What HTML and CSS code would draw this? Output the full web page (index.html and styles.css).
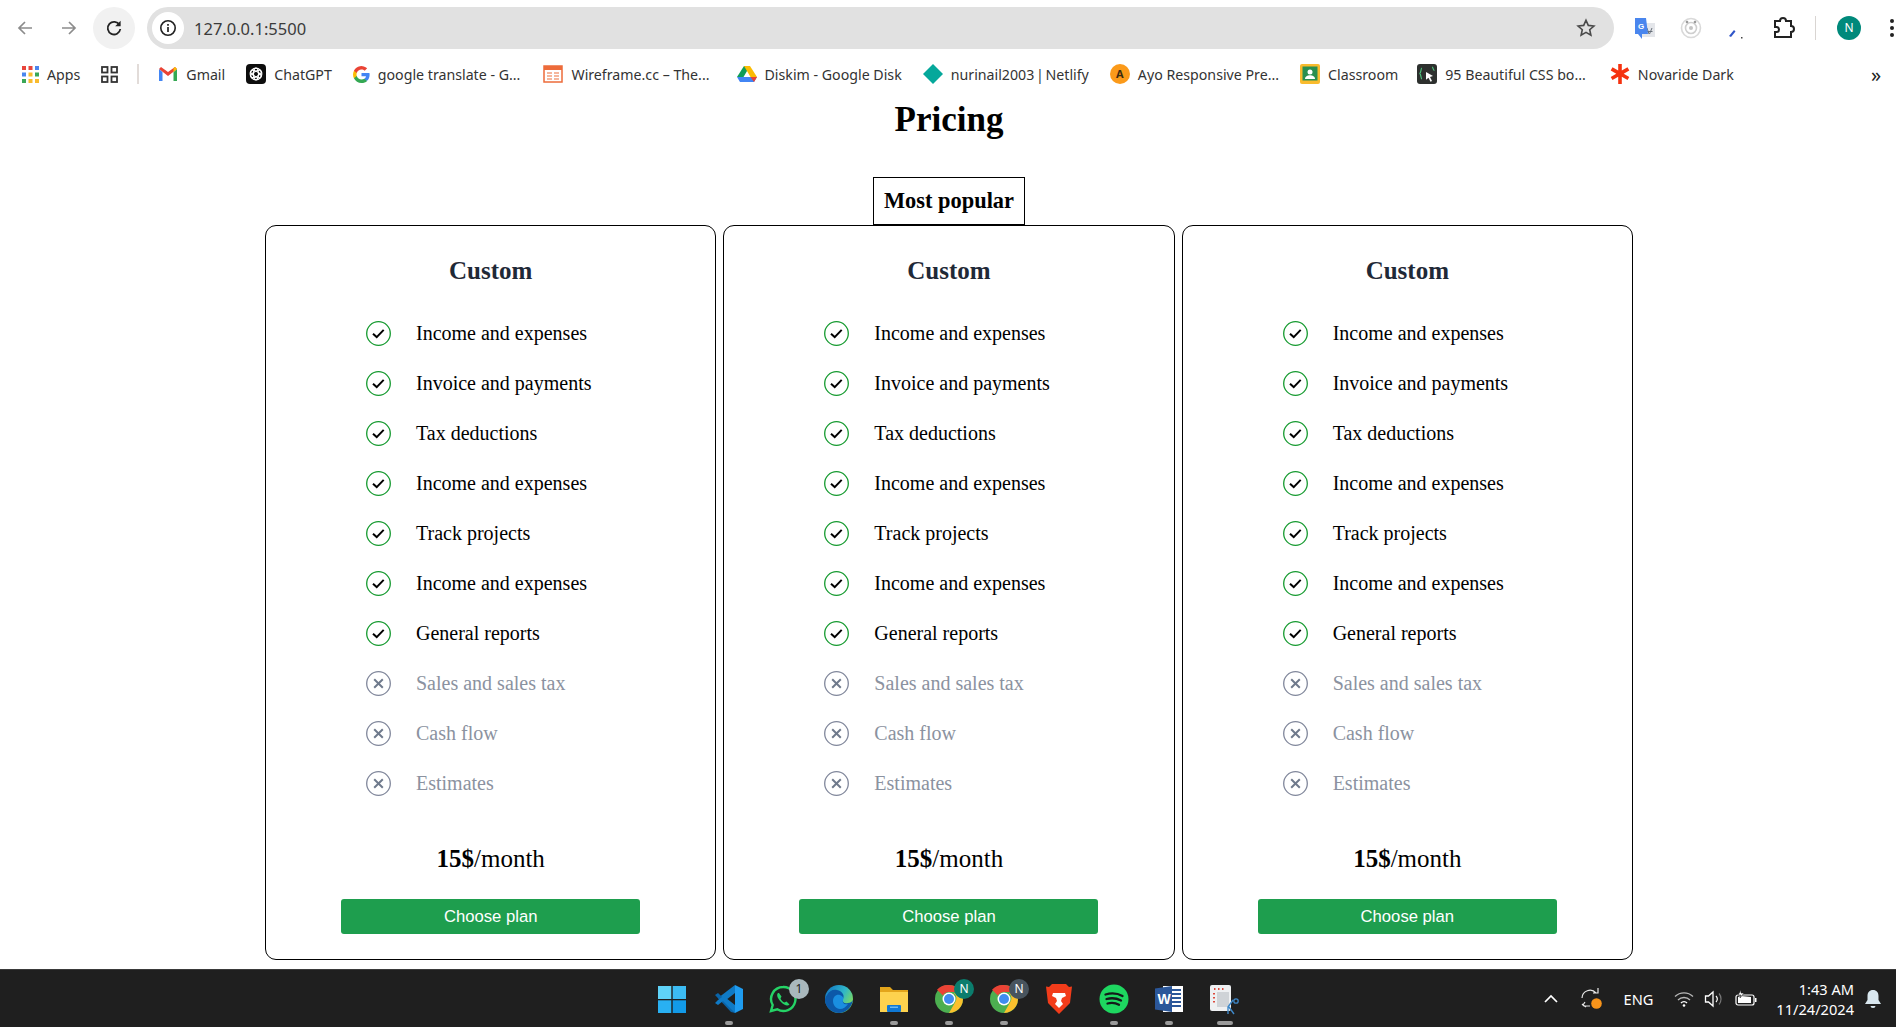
FILE: index.html
```html
<!DOCTYPE html>
<html lang="en">
<head>
    <meta charset="UTF-8">
    <meta name="viewport" content="width=device-width, initial-scale=1.0">
    <title>Pricing</title>
    <link rel="stylesheet" href="styles.css">
</head>
<body>
    <svg class="sprite" xmlns="http://www.w3.org/2000/svg">
        <symbol id="yes" viewBox="0 0 25 25">
            <circle cx="12.5" cy="12.5" r="11.8" fill="none" stroke="#159a2f" stroke-width="1.3"/>
            <path d="M7 12.800l3.700 3.300 7-7.200" fill="none" stroke="#000" stroke-width="2"/>
        </symbol>
        <symbol id="no" viewBox="0 0 25 25">
            <circle cx="12.5" cy="12.5" r="11.8" fill="none" stroke="#80879b" stroke-width="1.3"/>
            <path d="M8.200 8.200l8.600 8.600M16.800 8.200l-8.600 8.600" fill="none" stroke="#6f7a8c" stroke-width="2"/>
        </symbol>
        <linearGradient id="edge-top" x1="0" y1="0" x2="1" y2="0.600">
            <stop offset="0" stop-color="#0f6fc4"/>
            <stop offset="0.6" stop-color="#2fb6c9"/>
            <stop offset="1" stop-color="#7fdc5a"/>
        </linearGradient>
    </svg>

    <!-- browser top -->
    <header class="toolbar">
        <div class="nav-btn"><svg width="18" height="18" viewBox="0 0 18 18"><path d="M16 9H3M9 3L3 9l6 6" fill="none" stroke="#8c8c8c" stroke-width="1.7"/></svg></div>
        <div class="nav-btn"><svg width="18" height="18" viewBox="0 0 18 18"><path d="M2 9h13M9 3l6 6-6 6" fill="none" stroke="#8c8c8c" stroke-width="1.7"/></svg></div>
        <div class="nav-btn reload"><svg width="18" height="18" viewBox="0 0 18 18"><path d="M14.5 6A6.3 6.3 0 1 0 15.3 10" fill="none" stroke="#222" stroke-width="1.8"/><path d="M15.6 1.8v5.4h-5.4z" fill="#222"/></svg></div>
        <div class="address">
            <span class="site-info"><svg width="18" height="18" viewBox="0 0 18 18"><circle cx="9" cy="9" r="7.2" fill="none" stroke="#222" stroke-width="1.6"/><path d="M9 8v5M9 5v1.7" stroke="#222" stroke-width="1.7"/></svg></span>
            <span class="url">127.0.0.1:5500</span>
            <svg class="star" width="20" height="20" viewBox="0 0 20 20"><path d="M10 2.2l2.3 5.2 5.6.6-4.2 3.7 1.2 5.5L10 14.4l-4.900 2.800 1.200-5.500L2.100 8l5.600-.6z" fill="none" stroke="#4a4a4a" stroke-width="1.6"/></svg>
        </div>
        <div class="ext"><svg width="22" height="24" viewBox="0 0 22 24"><rect x="8" y="7" width="13" height="14" fill="#e4e6ea"/><path d="M13 12l2 6M18 12l-2.500 6M12.500 15.500h6" stroke="#68707a" fill="none"/><path d="M1 2h11l2 16H4l4 5v-5H1z" fill="#4a86ee"/><text x="4" y="13" class="ext-g">G</text></svg></div>
        <div class="ext"><svg width="22" height="22" viewBox="0 0 22 22"><circle cx="11" cy="11" r="9.500" fill="none" stroke="#d9d9d9" stroke-width="1.600"/><circle cx="11" cy="11" r="5.500" fill="none" stroke="#cfcfcf" stroke-width="1.600"/><circle cx="11" cy="11" r="2" fill="#c4c4c4"/><circle cx="7" cy="5" r="1.300" fill="#9b9b9b"/><circle cx="15" cy="5" r="1.300" fill="#9b9b9b"/></svg></div>
        <div class="ext"><svg width="22" height="22" viewBox="0 0 22 22"><path d="M3 19l5-6 1.500 1.500L5 20z" fill="#2f55c8"/><rect x="15" y="20" width="1.500" height="1.500" fill="#444"/></svg></div>
        <div class="ext"><svg width="24" height="24" viewBox="0 0 24 24"><path d="M4 5h5a3 3 0 0 1 6 0h5v5a3 3 0 0 1 0 6v5H4v-5h1.500a2.500 2.500 0 0 0 0-5H4z" fill="none" stroke="#222" stroke-width="2"/></svg></div>
        <div class="tool-sep"></div>
        <div class="avatar">N</div>
        <div class="dots"><i></i><i></i><i></i></div>
    </header>

    <nav class="bookmarks">
        <a class="mark apps"><svg width="17" height="17" viewBox="0 0 17 17"><g><rect width="4" height="4" fill="#e8453c"/><rect x="6.500" width="4" height="4" fill="#e8453c"/><rect x="13" width="4" height="4" fill="#4a86ee"/><rect y="6.500" width="4" height="4" fill="#4a86ee"/><rect x="6.500" y="6.500" width="4" height="4" fill="#f9bb2d"/><rect x="13" y="6.500" width="4" height="4" fill="#3aa757"/><rect y="13" width="4" height="4" fill="#3aa757"/><rect x="6.500" y="13" width="4" height="4" fill="#f9bb2d"/><rect x="13" y="13" width="4" height="4" fill="#f9bb2d"/></g></svg>Apps</a>
        <a class="mark grid-mark"><svg width="17" height="17" viewBox="0 0 17 17"><g fill="none" stroke="#333" stroke-width="1.800"><rect x="1" y="1" width="5.500" height="5.500"/><rect x="10.500" y="1" width="5.500" height="5.500"/><rect x="1" y="10.500" width="5.500" height="5.500"/><rect x="10.500" y="10.500" width="5.500" height="5.500"/></g></svg></a>
        <span class="mark-sep"></span>
        <a class="mark"><svg width="20" height="20" viewBox="0 0 20 20"><path d="M1 5v12h3.500V8z" fill="#4285f4"/><path d="M15.500 8v9H19V5z" fill="#34a853"/><path d="M1 5l9 7 9-7-2-2-7 5-7-5-2 2z" fill="#ea4335"/><path d="M15.500 8L19 5l-2-2-1.500 1.100z" fill="#fbbc04"/></svg>Gmail</a>
        <a class="mark"><svg width="20" height="20" viewBox="0 0 20 20"><rect width="20" height="20" rx="4" fill="#0d0d0d"/><g fill="none" stroke="#fff" stroke-width="1.200"><circle cx="10" cy="10" r="5.800"/><ellipse cx="10" cy="10" rx="5.800" ry="2.500" transform="rotate(30 10 10)"/><ellipse cx="10" cy="10" rx="5.800" ry="2.500" transform="rotate(90 10 10)"/><ellipse cx="10" cy="10" rx="5.800" ry="2.500" transform="rotate(150 10 10)"/></g></svg>ChatGPT</a>
        <a class="mark"><svg width="17" height="17" viewBox="0 0 18 18"><path d="M17.600 9.200c0-.6-.1-1.200-.2-1.800H9v3.400h4.800a4.100 4.100 0 0 1-1.800 2.700v2.200h2.900c1.700-1.600 2.700-3.900 2.700-6.500z" fill="#4285f4"/><path d="M9 18c2.400 0 4.500-.8 5.900-2.200L12 13.500c-.8.500-1.800.9-3 .9-2.300 0-4.300-1.600-5-3.700H1v2.300A9 9 0 0 0 9 18z" fill="#34a853"/><path d="M4 10.700a5.300 5.300 0 0 1 0-3.400V5H1a9 9 0 0 0 0 8z" fill="#fbbc05"/><path d="M9 3.600c1.300 0 2.500.5 3.400 1.300L15 2.400A9 9 0 0 0 1 5l3 2.300c.7-2.100 2.700-3.700 5-3.700z" fill="#ea4335"/></svg>google translate - G...</a>
        <a class="mark wireframe"><svg width="20" height="20" viewBox="0 0 20 20"><rect x="1" y="2" width="18" height="16" fill="#fff" stroke="#ed6b3a" stroke-width="1.500"/><rect x="1" y="2" width="18" height="4" fill="#ed6b3a"/><path d="M4 9h5M4 12h5M4 15h5M11 9h5M11 12h5M11 15h5" stroke="#f2a07e" stroke-width="1.500"/></svg>Wireframe.cc – The...</a>
        <a class="mark diskim"><svg width="20" height="18" viewBox="0 0 20 18"><path d="M7 1h6l-6.500 11H0z" fill="#0f9d58"/><path d="M7 1h6l7 11h-6.500z" fill="#fbbc04"/><path d="M0 12h20l-3 5H3z" fill="#4285f4"/><path d="M20 12h-6.500l3.500 5z" fill="#ea4335"/></svg>Diskim - Google Disk</a>
        <a class="mark netlify"><svg width="20" height="20" viewBox="0 0 20 20"><path d="M10 0l10 10-10 10L0 10z" fill="#05a89b"/></svg>nurinail2003 | Netlify</a>
        <a class="mark"><span class="ayo">A</span>Ayo Responsive Pre...</a>
        <a class="mark"><svg width="20" height="20" viewBox="0 0 20 20"><rect width="20" height="20" rx="2" fill="#f9bb2d"/><rect x="2.500" y="2.500" width="15" height="14" fill="#2a8f4f"/><circle cx="10" cy="8" r="2.500" fill="#fff"/><path d="M5 15c0-5 10-5 10 0z" fill="#fff"/></svg>Classroom</a>
        <a class="mark beautiful"><svg width="20" height="20" viewBox="0 0 20 20"><rect width="20" height="20" rx="3" fill="#2d302e"/><path d="M5 4C3.500 4 4.500 9 2.500 9.500 4.500 10 3.500 15 5 15" fill="none" stroke="#4ec27c" stroke-width="1.200"/><path d="M15 3c1.500 0 .5 3 2.500 3.500" fill="none" stroke="#4ec27c" stroke-width="1.200"/><path d="M9 8l7 4-3 1 2 4-1.500.7-2-4-2.500 2z" fill="#fff"/></svg>95 Beautiful CSS bo...</a>
        <a class="mark novaride"><svg width="20" height="20" viewBox="0 0 20 20"><path d="M8.200 0h3.600v6.500l5.700-3.200 1.800 3.100-5.600 3.300 5.600 3.200-1.800 3.200-5.700-3.300V20H8.200v-7.200l-5.700 3.300L.7 13l5.600-3.200L.7 6.400l1.800-3.100 5.700 3.200z" fill="#f5320f"/></svg>Novaride Dark</a>
        <span class="more">»</span>
    </nav>

    <main class="pricing">
        <h1 class="page-title">Pricing</h1>
        <div class="popular">Most popular</div>
        <div class="plans">
            <section class="plan">
                <h2 class="plan-name">Custom</h2>
                <ul class="features">
                    <li><svg class="mark-icon"><use href="#yes"/></svg>Income and expenses</li>
                    <li><svg class="mark-icon"><use href="#yes"/></svg>Invoice and payments</li>
                    <li><svg class="mark-icon"><use href="#yes"/></svg>Tax deductions</li>
                    <li><svg class="mark-icon"><use href="#yes"/></svg>Income and expenses</li>
                    <li><svg class="mark-icon"><use href="#yes"/></svg>Track projects</li>
                    <li><svg class="mark-icon"><use href="#yes"/></svg>Income and expenses</li>
                    <li><svg class="mark-icon"><use href="#yes"/></svg>General reports</li>
                    <li class="off"><svg class="mark-icon"><use href="#no"/></svg>Sales and sales tax</li>
                    <li class="off"><svg class="mark-icon"><use href="#no"/></svg>Cash flow</li>
                    <li class="off"><svg class="mark-icon"><use href="#no"/></svg>Estimates</li>
                </ul>
                <p class="price"><b>15$</b>/month</p>
                <button class="choose">Choose plan</button>
            </section>
            <section class="plan">
                <h2 class="plan-name">Custom</h2>
                <ul class="features">
                    <li><svg class="mark-icon"><use href="#yes"/></svg>Income and expenses</li>
                    <li><svg class="mark-icon"><use href="#yes"/></svg>Invoice and payments</li>
                    <li><svg class="mark-icon"><use href="#yes"/></svg>Tax deductions</li>
                    <li><svg class="mark-icon"><use href="#yes"/></svg>Income and expenses</li>
                    <li><svg class="mark-icon"><use href="#yes"/></svg>Track projects</li>
                    <li><svg class="mark-icon"><use href="#yes"/></svg>Income and expenses</li>
                    <li><svg class="mark-icon"><use href="#yes"/></svg>General reports</li>
                    <li class="off"><svg class="mark-icon"><use href="#no"/></svg>Sales and sales tax</li>
                    <li class="off"><svg class="mark-icon"><use href="#no"/></svg>Cash flow</li>
                    <li class="off"><svg class="mark-icon"><use href="#no"/></svg>Estimates</li>
                </ul>
                <p class="price"><b>15$</b>/month</p>
                <button class="choose">Choose plan</button>
            </section>
            <section class="plan">
                <h2 class="plan-name">Custom</h2>
                <ul class="features">
                    <li><svg class="mark-icon"><use href="#yes"/></svg>Income and expenses</li>
                    <li><svg class="mark-icon"><use href="#yes"/></svg>Invoice and payments</li>
                    <li><svg class="mark-icon"><use href="#yes"/></svg>Tax deductions</li>
                    <li><svg class="mark-icon"><use href="#yes"/></svg>Income and expenses</li>
                    <li><svg class="mark-icon"><use href="#yes"/></svg>Track projects</li>
                    <li><svg class="mark-icon"><use href="#yes"/></svg>Income and expenses</li>
                    <li><svg class="mark-icon"><use href="#yes"/></svg>General reports</li>
                    <li class="off"><svg class="mark-icon"><use href="#no"/></svg>Sales and sales tax</li>
                    <li class="off"><svg class="mark-icon"><use href="#no"/></svg>Cash flow</li>
                    <li class="off"><svg class="mark-icon"><use href="#no"/></svg>Estimates</li>
                </ul>
                <p class="price"><b>15$</b>/month</p>
                <button class="choose">Choose plan</button>
            </section>
        </div>
    </main>

    <!-- windows taskbar -->
    <footer class="taskbar">
        <div class="task-apps">
            <div class="app start"><svg width="30" height="30" viewBox="0 0 30 30"><path d="M1 2h13.300v13H1z" fill="#5fd3f8"/><path d="M15.700 2H29v13H15.700z" fill="#3cbcf4"/><path d="M1 16.300h13.300V29H1z" fill="#29b0f2"/><path d="M15.700 16.300H29V29H15.700z" fill="#129ae8"/></svg></div>
            <div class="app on"><svg width="30" height="30" viewBox="0 0 30 30"><path d="M21 1l8 4v20l-8 4z" fill="#1f9cf0"/><path d="M21 1v8L9.500 18 4 14z" fill="#0f7ac6"/><path d="M1 11l3-2 17 16v4l-4-1z" fill="#0a64a8"/><path d="M21 29V21L9.500 12 4 16l-3 3 3 2 5-4z" fill="#0f7ac6"/></svg></div>
            <div class="app"><svg width="32" height="32" viewBox="0 0 32 32"><path d="M15 4a12 12 0 0 0-10.300 18L3 28l6.300-1.700A12 12 0 1 0 15 4z" fill="none" stroke="#25d366" stroke-width="2.400"/><path d="M10 10c-2 2 0 6 3 9s6.500 4.500 8.500 2.500l-3-3-2 1c-1.500-.5-3.500-2.500-4-4l1-2-2.500-3.500z" fill="#25d366"/></svg><span class="count">1</span></div>
            <div class="app"><svg width="30" height="30" viewBox="0 0 30 30"><circle cx="15" cy="15" r="14" fill="url(#edge-top)"/><path d="M3 11c2-4 6-6 10-5 5 1 8 5 6 9-1 3 1 5 5 4 2 0 4-1 5-3-1 7-7 13-14 13C8 29 1 23 1 16c0-2 1-4 2-5z" fill="#0c59a8"/><path d="M9 17c0-4 3-7 7-6 3 1 4 3 3 5-1 3 1 5 5 4-2 3-5 5-8 5-4 0-7-4-7-8z" fill="#1a8fe0"/></svg></div>
            <div class="app on"><svg width="30" height="30" viewBox="0 0 30 30"><path d="M1 3h10l3 3h15v22H1z" fill="#e3a51b"/><path d="M1 8h28v20H1z" fill="#fdd24e"/><rect x="8" y="21" width="14" height="7" rx="1" fill="#0f78d4"/><rect x="11" y="22.500" width="8" height="1.500" fill="#6cb9f0"/></svg></div>
            <div class="app on chrome"><svg width="30" height="30" viewBox="0 0 30 30"><circle cx="15" cy="15" r="14" fill="#4caf50"/><path d="M15 1a14 14 0 0 1 12.100 7H15a7 7 0 0 0-6.100 3.500L3 5.800A14 14 0 0 1 15 1z" fill="#ea4335"/><path d="M27.100 8A14 14 0 0 1 15 29l6-10.500A7 7 0 0 0 20 9z" fill="#fbc02d"/><circle cx="15" cy="15" r="6.500" fill="#fff"/><circle cx="15" cy="15" r="5" fill="#3f8cf0"/></svg><span class="profile teal">N</span></div>
            <div class="app on chrome"><svg width="30" height="30" viewBox="0 0 30 30"><circle cx="15" cy="15" r="14" fill="#4caf50"/><path d="M15 1a14 14 0 0 1 12.100 7H15a7 7 0 0 0-6.100 3.500L3 5.800A14 14 0 0 1 15 1z" fill="#ea4335"/><path d="M27.100 8A14 14 0 0 1 15 29l6-10.500A7 7 0 0 0 20 9z" fill="#fbc02d"/><circle cx="15" cy="15" r="6.500" fill="#fff"/><circle cx="15" cy="15" r="5" fill="#3f8cf0"/></svg><span class="profile slate">N</span></div>
            <div class="app"><svg width="28" height="32" viewBox="0 0 28 32"><path d="M7 1h14l3 3 3-.5L25 20l-11 11L3 20 1 3.500 4 4z" fill="#f23c1a"/><path d="M8 10h12l1 3-4 2-1 3 2 3-4 4-4-4 2-3-1-3-4-2z" fill="#fff"/></svg></div>
            <div class="app on"><svg width="30" height="30" viewBox="0 0 30 30"><circle cx="15" cy="15" r="14.500" fill="#1ed760"/><path d="M6.500 10.500c6-1.700 12-1.200 17 1.500M7.500 15c5-1.300 10-.9 14.500 1.500M8.500 19.500c4-1 8-.7 11.500 1.200" fill="none" stroke="#14191a" stroke-width="2.300" stroke-linecap="round"/></svg></div>
            <div class="app on"><svg width="30" height="30" viewBox="0 0 30 30"><rect x="9" y="2" width="20" height="26" fill="#fff"/><path d="M17 6h10M17 10h10M17 14h10M17 18h10M17 22h10" stroke="#2b579a" stroke-width="2"/><path d="M1 4.500L18 2v26L1 25.500z" fill="#2b579a"/><text x="3.500" y="20" class="word-w">W</text></svg></div>
            <div class="app on snip"><svg width="32" height="32" viewBox="0 0 32 32"><rect x="2" y="2" width="21" height="26" rx="2" fill="#eef0f2"/><path d="M6 6h1.500M10 6h1.500M14 6h1.500M6 10v1.500M6 14v1.500M6 18v1.500" stroke="#dc4a3d" stroke-width="2"/><rect x="9" y="9" width="12" height="15" fill="#cfd3d7"/><path d="M25 17l-5 7v7M21 24l5 7" stroke="#3d87c8" fill="none" stroke-width="1.400"/><circle cx="28" cy="18" r="2.200" fill="none" stroke="#3d87c8" stroke-width="1.300"/></svg></div>
        </div>
        <div class="tray">
            <svg class="tray-chev" width="16" height="10" viewBox="0 0 16 10"><path d="M2 8l6-6 6 6" fill="none" stroke="#fff" stroke-width="1.700"/></svg>
            <svg class="tray-sync" width="24" height="24" viewBox="0 0 24 24"><path d="M3 11a8 8 0 0 1 14-5M19 1v5h-5M3 17l2 2h6M6 15l-2 3 3 2" fill="none" stroke="#e8e8e8" stroke-width="1.200"/><circle cx="17.500" cy="16.500" r="5.300" fill="#f7931a"/></svg>
            <span class="lang">ENG</span>
            <svg class="tray-wifi" width="20" height="16" viewBox="0 0 20 16"><path d="M1 5.500a13 13 0 0 1 18 0M4 9a8.500 8.500 0 0 1 12 0" fill="none" stroke="#b9b9b9" stroke-width="1.300"/><path d="M7 12a4 4 0 0 1 6 0" fill="none" stroke="#fff" stroke-width="1.400"/><circle cx="10" cy="14.500" r="1.300" fill="#fff"/></svg>
            <svg class="tray-vol" width="20" height="18" viewBox="0 0 20 18"><path d="M1.500 6h3l4.500-4v14L4.500 12h-3z" fill="none" stroke="#fff" stroke-width="1.300"/><path d="M12 6a4.500 4.500 0 0 1 0 6" fill="none" stroke="#fff" stroke-width="1.200"/><path d="M15 3.500a8.500 8.500 0 0 1 0 11" fill="none" stroke="#777" stroke-width="1.200"/></svg>
            <svg class="tray-batt" width="22" height="18" viewBox="0 0 22 18"><path d="M3 5h14a2 2 0 0 1 2 2v6a2 2 0 0 1-2 2H3a2 2 0 0 1-2-2V7a2 2 0 0 1 2-2z" fill="none" stroke="#fff" stroke-width="1.200"/><path d="M3 7l3-1 10 1v6H3z" fill="#fff"/><rect x="20" y="8" width="1.500" height="4" fill="#fff"/><path d="M6 0L3 5h3l-1 3 4-5H6z" fill="#fff" stroke="#202020" stroke-width=".6"/></svg>
            <div class="clock">
                <span>1:43 AM</span>
                <span>11/24/2024</span>
            </div>
            <svg class="tray-bell" width="18" height="20" viewBox="0 0 18 20"><path d="M9 1c-3.500 0-5.500 2.500-5.500 6v4L1 15h16l-2.500-4V7c0-3.500-2-6-5.500-6z" fill="#d8e6ee"/><path d="M6.500 17a2.500 2 0 0 0 5 0z" fill="#d8e6ee"/></svg>
        </div>
    </footer>
</body>
</html>
```

FILE: styles.css
```css
* {
    box-sizing: border-box;
}

body {
    margin: 0;
    height: 1027px;
    overflow: hidden;
    display: flex;
    flex-direction: column;
    background-color: #fff;
    color: #000;
    font-family: "Liberation Serif", serif;
}

.sprite {
    position: absolute;
    width: 0;
    height: 0;
}

/* browser top */
.toolbar {
    height: 56px;
    padding-left: 3px;
    display: flex;
    align-items: center;
    flex-shrink: 0;
}

.nav-btn {
    width: 44px;
    height: 42px;
    display: flex;
    align-items: center;
    justify-content: center;
}

.reload {
    width: 42px;
    margin-left: 2px;
    background-color: #f1f1f1;
    border-radius: 50%;
}

.address {
    width: 1467px;
    height: 42px;
    margin-left: 12px;
    padding: 0 18px 0 5px;
    display: flex;
    align-items: center;
    background-color: #e1e1e1;
    border-radius: 21px;
}

.site-info {
    width: 32px;
    height: 32px;
    display: flex;
    align-items: center;
    justify-content: center;
    background-color: #fff;
    border-radius: 50%;
}

.url {
    margin-left: 10px;
    font-family: "Noto Sans", sans-serif;
    font-size: 16.5px;
    color: #3b3b3b;
}

.star {
    margin-left: auto;
}

.ext {
    width: 46px;
    display: flex;
    justify-content: center;
    flex-shrink: 0;
}

.address + .ext {
    margin-left: 8px;
}

.ext-g {
    font-family: "Liberation Sans", sans-serif;
    font-size: 8px;
    font-weight: bold;
    fill: #fff;
}

.tool-sep {
    width: 1px;
    height: 24px;
    margin-left: 9px;
    background-color: #d9d5d2;
    flex-shrink: 0;
}

.avatar {
    width: 24px;
    height: 24px;
    margin-left: 21px;
    border-radius: 50%;
    background-color: #00897b;
    color: #fff;
    font-family: "Noto Sans", sans-serif;
    font-size: 12px;
    line-height: 24px;
    text-align: center;
    flex-shrink: 0;
}

.dots {
    margin-left: 29px;
    display: flex;
    flex-direction: column;
    gap: 3px;
    flex-shrink: 0;
}

.dots i {
    width: 4px;
    height: 4px;
    border-radius: 50%;
    background-color: #222;
}

/* bookmarks */
.bookmarks {
    height: 36px;
    padding-left: 22px;
    display: flex;
    align-items: center;
    gap: 21px;
    flex-shrink: 0;
    font-family: "Noto Sans", sans-serif;
    font-size: 14.2px;
    color: #333;
    white-space: nowrap;
}

.mark {
    display: flex;
    align-items: center;
    gap: 8px;
}

.wireframe {
    margin-left: 2px;
}

.diskim {
    margin-left: 6px;
}

.netlify {
    word-spacing: -2px;
}

.beautiful {
    margin-left: -2px;
}

.novaride {
    margin-left: 3px;
}

.mark-sep {
    width: 2px;
    height: 20px;
    margin: 0 -2px;
    background-color: #e2dcd9;
}

.ayo {
    width: 20px;
    height: 20px;
    border-radius: 50%;
    background-color: #fb9a1a;
    color: #3a2a10;
    font-size: 11px;
    font-weight: bold;
    line-height: 20px;
    text-align: center;
}

.more {
    position: absolute;
    left: 1871px;
    font-size: 20px;
    color: #222;
}

/* pricing */
.pricing {
    flex: 1;
    padding-left: 2px;
    display: flex;
    flex-direction: column;
    align-items: center;
}

.page-title {
    margin: 8px 0 37px;
    font-size: 35px;
    line-height: 40px;
}

.popular {
    height: 48px;
    padding: 0 10px;
    border: 1px solid #000;
    font-size: 22.4px;
    font-weight: bold;
    line-height: 46px;
}

.plans {
    width: 1368px;
    display: grid;
    grid-template-columns: repeat(3, 1fr);
    gap: 7px;
}

.plan {
    height: 735px;
    border: 1px solid #000;
    border-radius: 11px;
    display: flex;
    flex-direction: column;
    align-items: center;
}

.plan-name {
    margin: 30px 0 22px;
    font-size: 25px;
    line-height: 30px;
    color: #1f2937;
}

.features {
    list-style: none;
    width: 100%;
    margin: 0;
    padding: 0 0 0 100px;
    font-size: 20px;
}

.features li {
    height: 50px;
    display: flex;
    align-items: center;
    gap: 25px;
}

.features .off {
    color: #8b92a0;
}

.mark-icon {
    width: 25px;
    height: 25px;
    flex-shrink: 0;
}

.price {
    margin: 36px 0 25px;
    font-size: 25px;
    line-height: 30px;
}

.choose {
    width: 299px;
    height: 35px;
    border: none;
    border-radius: 3px;
    background-color: #1e9e4e;
    color: #fff;
    font-family: "Liberation Sans", sans-serif;
    font-size: 16.67px;
    cursor: pointer;
}

/* taskbar */
.taskbar {
    height: 58px;
    border-top: 1px solid #3a3a3a;
    display: flex;
    align-items: center;
    flex-shrink: 0;
    background-color: #1f1f1f;
    color: #fff;
    font-family: "Noto Sans", sans-serif;
}

.task-apps {
    margin-left: 646px;
    display: flex;
}

.app {
    position: relative;
    width: 55px;
    height: 57px;
    display: flex;
    align-items: center;
    justify-content: center;
}

.start {
    margin-left: -2px;
    margin-right: 2px;
}

.app.on::after {
    content: "";
    position: absolute;
    left: 24px;
    bottom: 2px;
    width: 8px;
    height: 4px;
    border-radius: 2px;
    background-color: #9a9a9a;
}

.snip.on::after {
    left: 21px;
    width: 16px;
}

.count,
.profile {
    position: absolute;
    width: 20px;
    height: 20px;
    top: 9px;
    left: 33px;
    border-radius: 50%;
    font-size: 12px;
    line-height: 20px;
    text-align: center;
}

.count {
    background-color: #a9b8bd;
    color: #1f1f1f;
}

.teal {
    background-color: #0b7d6d;
}

.slate {
    background-color: #48545e;
}

.word-w {
    font-family: "Liberation Sans", sans-serif;
    font-size: 14px;
    font-weight: bold;
    fill: #fff;
}

.tray {
    margin-left: auto;
    padding-right: 14px;
    display: flex;
    align-items: center;
}

.tray-sync {
    margin-left: 20px;
}

.lang {
    margin-left: 21px;
    font-size: 14.6px;
}

.tray-wifi {
    margin-left: 21px;
}

.tray-vol {
    margin-left: 10px;
}

.tray-batt {
    margin-left: 11px;
}

.clock {
    margin-left: 19px;
    display: flex;
    flex-direction: column;
    align-items: flex-end;
    font-size: 14.6px;
    line-height: 20px;
}

.tray-bell {
    margin-left: 10px;
}
```
